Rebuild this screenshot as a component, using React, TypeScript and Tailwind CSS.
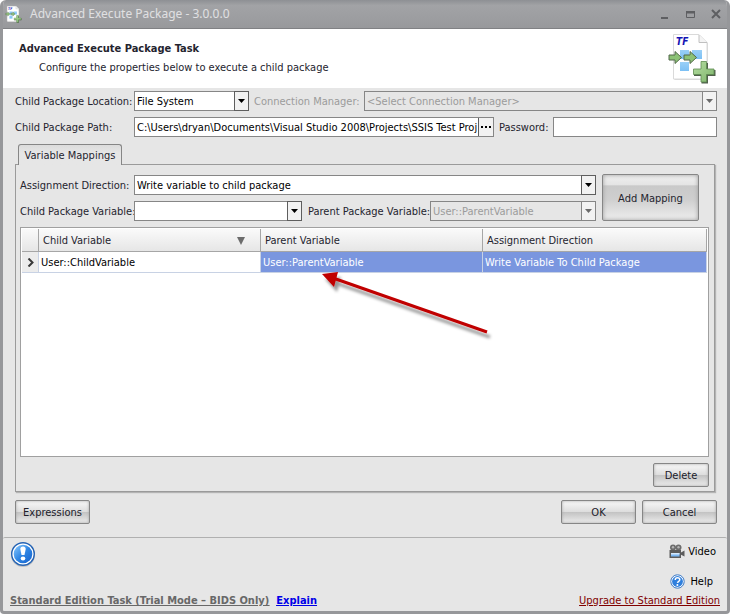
import React, { useId } from "react";

const FONT = "font-['DejaVu_Sans_Condensed','DejaVu_Sans','Noto_Sans',sans-serif]";

function PackageIcon({ className }: { className: string }) {
  return (
    <svg viewBox="0 0 48 50" className={className} aria-hidden="true">
      <defs>
        <linearGradient id="plusFill" x1="0" y1="0" x2="1" y2="1">
          <stop offset="0" stopColor="#b4dca0" />
          <stop offset="1" stopColor="#7fb56c" />
        </linearGradient>
        <linearGradient id="boxFill" x1="0" y1="0" x2="0" y2="1">
          <stop offset="0" stopColor="#9ad0f8" />
          <stop offset="1" stopColor="#7cc0f4" />
        </linearGradient>
      </defs>
      <path d="M6.500 1.500H32L40 9V46H6.500Z" fill="#d8d8d8" />
      <path d="M5.500 .5H31L39 8.500V45H5.500Z" fill="#fff" stroke="#dadada" />
      <path d="M31 1V8.500H39" fill="#f4f4f4" stroke="#c0c0c0" />
      <text x="8" y="11" fontSize="10" fontWeight="bold" fontStyle="italic" fill="#1414b4">TF</text>
      <g fill="url(#boxFill)">
        <rect x="12" y="16" width="9" height="9" />
        <rect x="24" y="16" width="10" height="9" />
        <rect x="12" y="28" width="9" height="9" />
      </g>
      <g fill="#8cc276" stroke="#52694a" strokeWidth="1" strokeLinejoin="round">
        <path d="M1 21H7V17.500L13.500 23.500L7 29.500V26H1Z" />
        <path d="M16 21H22V17.500L28.500 23.500L22 29.500V26H16Z" />
      </g>
      <path d="M33.500 29H40V36H47.500V42H40V49.500H33.500V42H26V36H33.500Z" fill="#51604c" />
      <path d="M33 27.500H38.500V35H46V40.500H38.500V48H33V40.500H25.500V35H33Z" fill="url(#plusFill)" stroke="#5e8c50" strokeWidth=".8" strokeLinejoin="round" />
    </svg>
  );
}

function InfoIcon() {
  return (
    <svg viewBox="0 0 26 26" className="size-[26px]" aria-hidden="true">
      <defs>
        <linearGradient id="infoFill" x1="0" y1="0" x2="1" y2="1">
          <stop offset="0" stopColor="#8ccbff" />
          <stop offset=".5" stopColor="#2f86e4" />
          <stop offset="1" stopColor="#1260cc" />
        </linearGradient>
      </defs>
      <circle cx="13" cy="14" r="12" fill="#a9a9a9" opacity=".6" />
      <circle cx="13" cy="13" r="11.300" fill="#fff" stroke="#2664b4" strokeWidth="1.400" />
      <circle cx="13" cy="13" r="9.300" fill="url(#infoFill)" />
      <path d="M10.300 8Q10.300 5.500 13 5.500T15.700 8L14.500 14H11.500Z" fill="#fff" />
      <ellipse cx="13" cy="17.500" rx="2.300" ry="2" fill="#fff" />
    </svg>
  );
}

function HelpIcon() {
  return (
    <svg viewBox="0 0 15 15" className="size-[15px]" aria-hidden="true">
      <circle cx="7.500" cy="7.500" r="6.700" fill="#fff" stroke="#3a78c4" />
      <circle cx="7.500" cy="7.500" r="5.400" fill="#2f7fdd" />
      <path d="M5.200 6Q5.300 3.800 7.500 3.800T9.800 5.800C9.800 7.300 7.700 7.200 7.500 8.800" fill="none" stroke="#fff" strokeWidth="1.500" />
      <circle cx="7.400" cy="11" r="1" fill="#fff" />
    </svg>
  );
}

function VideoIcon() {
  return (
    <svg viewBox="0 0 16 15" className="h-[15px] w-4" aria-hidden="true">
      <circle cx="4" cy="3.500" r="3" fill="#6c6c6c" />
      <circle cx="9.500" cy="3.500" r="3" fill="#6c6c6c" />
      <circle cx="4" cy="3.300" r="1.200" fill="#b4b4b4" />
      <circle cx="9.500" cy="3.300" r="1.200" fill="#b4b4b4" />
      <path d="M.5 6H12V8.500L15.500 6.500V12.500L12 10.800V14H.5Z" fill="#5c5c5c" />
      <rect x="2" y="9" width="8.500" height="3.500" fill="#7cb8f4" />
      <rect x="2" y="9" width="8.500" height="1.500" fill="#d4e8fc" />
    </svg>
  );
}

type DropProps = { id: string; value: string; className: string; disabled?: boolean };

function DropDown({ id, value, className, disabled }: DropProps) {
  return (
    <div className={`relative ${className}`}>
      <select
        id={id}
        disabled={disabled}
        className="block h-5 w-full appearance-none border border-[#868686] bg-white pt-px pr-4 pl-[2px] text-black opacity-100 disabled:bg-[#e6e6e6] disabled:text-[#9b9b9b]"
      >
        <option>{value}</option>
      </select>
      <span
        className={`pointer-events-none absolute inset-y-0 right-0 flex w-[15px] items-center justify-center border bg-[#f2f2f2] ${
          disabled ? "border-[#868686] text-[#6a6a6a]" : "border-[#5e5e5e] text-black"
        }`}
      >
        <svg viewBox="0 0 7 4" className="h-1 w-[7px]" fill="currentColor" aria-hidden="true">
          <path d="M0 0H7L3.500 4Z" />
        </svg>
      </span>
    </div>
  );
}

function GlossButton({ children, className }: { children: React.ReactNode; className: string }) {
  return (
    <button
      type="button"
      className={`rounded-[2px] border border-[#868686] bg-[linear-gradient(#f8f8f8_0,#dedede_48%,#c2c2c2_50%,#ececec_100%)] pt-[2px] text-[#20202a] shadow-[inset_0_0_3px_#a4a4a4] ${className}`}
    >
      {children}
    </button>
  );
}

export default function App() {
  const uid = useId();
  const id = (name: string) => `${uid}-${name}`;
  const label = "shrink-0 whitespace-nowrap pt-px";
  const th = "h-[23px] border-r border-b border-[#a6a6a6] bg-linear-to-b from-[#fafafa] to-[#e6e6e6] p-0 pt-[2px] pl-1 text-left font-normal";

  return (
    <div className={`flex min-h-screen flex-col overflow-hidden rounded-t-md rounded-b-sm border-x-[3px] border-b-[3px] border-[#96979a] bg-[#e6e6e6] text-[11px] leading-[14px] text-[#24242e] ${FONT}`}>
      <header className="flex h-[29px] items-center border-b border-[#808184] bg-linear-to-b from-[#8e9094] from-0% via-[#a2a3a6] via-20% to-[#98999c] pr-1 pl-[2px]">
        <PackageIcon className="size-[17px]" />
        <h1 className="ml-2 flex-1 font-['Noto_Sans',sans-serif] text-xs text-[#e0e0e2]">Advanced Execute Package - 3.0.0.0</h1>
        <div className="flex gap-3 text-[#5e5f62]">
          <button type="button" aria-label="Minimize" className="size-[14px]">
            <svg viewBox="0 0 14 14"><path d="M4 10H11V12H4Z" fill="currentColor" /></svg>
          </button>
          <button type="button" aria-label="Maximize" className="size-[14px]">
            <svg viewBox="0 0 14 14"><path d="M3.500 5V10.500H11.500V5" fill="none" stroke="currentColor" /><path d="M3 4H12V6.500H3Z" fill="currentColor" /></svg>
          </button>
          <button type="button" aria-label="Close" className="size-[14px]">
            <svg viewBox="0 0 14 14"><path d="M3 3L11 11M11 3L3 11" stroke="currentColor" strokeWidth="2" /></svg>
          </button>
        </div>
      </header>

      <section className="flex h-[59px] items-start justify-between bg-white pt-[13px] pr-[11px] pl-4">
        <div>
          <h2 className="font-bold">Advanced Execute Package Task</h2>
          <p className="mt-[5px] ml-5">Configure the properties below to execute a child package</p>
        </div>
        <PackageIcon className="-mt-2 h-[50px] w-12" />
      </section>

      <main className="flex flex-1 flex-col pr-[10px] pl-3">
        <div className="mt-[3px] flex items-center">
          <label htmlFor={id("loc")} className={`${label} w-[119px]`}>Child Package Location:</label>
          <DropDown id={id("loc")} value="File System" className="w-[115px]" />
          <label htmlFor={id("conn")} className={`${label} ml-[5px] w-[110px] text-[#9b9b9b]`}>Connection Manager:</label>
          <DropDown id={id("conn")} value="<Select Connection Manager>" className="min-w-0 flex-1" disabled />
        </div>
        <div className="mt-[6px] flex items-center">
          <label htmlFor={id("path")} className={`${label} w-[119px]`}>Child Package Path:</label>
          <div className="flex h-5 min-w-0 flex-1 border border-[#868686] bg-white">
            <input
              id={id("path")}
              className="mr-px min-w-0 flex-1 pt-px pl-[2px] text-black outline-none"
              defaultValue="C:\Users\dryan\Documents\Visual Studio 2008\Projects\SSIS Test Project\Child.dtsx"
            />
            <button type="button" aria-label="Browse" className="flex w-[15px] items-center justify-center gap-[2px] border-l border-[#5e5e5e] bg-[#f2f2f2]">
              <i className="size-[2px] bg-black" /><i className="size-[2px] bg-black" /><i className="size-[2px] bg-black" />
            </button>
          </div>
          <label htmlFor={id("pwd")} className={`${label} ml-[5px] w-[54px]`}>Password:</label>
          <input id={id("pwd")} type="password" className="h-5 w-[164px] border border-[#868686] bg-white px-1 outline-none" />
        </div>

        <div role="tablist" className="mt-[7px] flex pl-[3px]">
          <button
            type="button"
            role="tab"
            aria-selected="true"
            className="relative z-10 -mb-px h-[21px] w-[104px] rounded-t-[3px] border border-b-0 border-[#868686] bg-linear-to-b from-[#dcdcdc] to-[#e6e6e6] to-40% pt-[2px]"
          >
            Variable Mappings
          </button>
        </div>
        <div role="tabpanel" className="mr-[2px] flex flex-1 flex-col border border-[#9a9a9a] pt-[10px] pr-[5px] pb-1 pl-1 shadow-[1px_1px_1px_#b4b4b4]">
          <div className="flex pr-[10px]">
            <div className="flex min-w-0 flex-1 flex-col gap-[6px]">
              <div className="flex items-center">
                <label htmlFor={id("dir")} className={`${label} w-[114px]`}>Assignment Direction:</label>
                <DropDown id={id("dir")} value="Write variable to child package" className="min-w-0 flex-1" />
              </div>
              <div className="flex items-center">
                <label htmlFor={id("cvar")} className={`${label} w-[114px]`}>Child Package Variable:</label>
                <DropDown id={id("cvar")} value="" className="min-w-0 flex-1" />
                <label htmlFor={id("pvar")} className={`${label} ml-[6px] w-[122px]`}>Parent Package Variable:</label>
                <DropDown id={id("pvar")} value="User::ParentVariable" className="w-[166px]" disabled />
              </div>
            </div>
            <button
              type="button"
              className="-mt-px ml-[6px] h-[47px] w-[97px] rounded-[2px] border border-[#868686] bg-[linear-gradient(#f0f0f0_0,#e4e4e4_22%,#c9c9c9_24%,#cfcfcf_55%,#eeeeee_100%)] pt-[2px] shadow-[inset_0_0_4px_#9c9c9c]"
            >
              Add Mapping
            </button>
          </div>

          <div className="relative mt-[6px] flex-1 border border-[#a0a0a0] bg-white p-px">
            <table className="w-full table-fixed border-separate border-spacing-0">
              <thead>
                <tr>
                  <th className={`${th} w-[17px]`} />
                  <th className={`${th} w-[222px]`}>
                    <span className="flex items-center justify-between pr-[15px]">
                      Child Variable
                      <svg viewBox="0 0 8 8" className="size-2" aria-hidden="true"><path d="M0 0H8L4 8Z" fill="#6c6c6c" /></svg>
                    </span>
                  </th>
                  <th className={`${th} w-[222px]`}>Parent Variable</th>
                  <th className={th}>Assignment Direction</th>
                </tr>
              </thead>
              <tbody className="[&_td]:h-[21px] [&_td]:border-r [&_td]:border-b [&_td]:border-[#c8d2e4] [&_td]:p-0 [&_td]:pt-px [&_td]:pl-[2px]">
                <tr>
                  <td className="bg-[#ececec]">
                    <svg viewBox="0 0 8 9" className="ml-[3px] h-[9px] w-2" aria-hidden="true"><path d="M1.500 .5L5.500 4.500L1.500 8.500" fill="none" stroke="#383838" strokeWidth="2" /></svg>
                  </td>
                  <td className="text-black">User::ChildVariable</td>
                  <td className="bg-[#7a96df] text-white">User::ParentVariable</td>
                  <td className="bg-[#7a96df] text-white">Write Variable To Child Package</td>
                </tr>
              </tbody>
            </table>
            <svg viewBox="0 0 180 80" className="pointer-events-none absolute top-[42px] left-[296px] h-20 w-[180px]" aria-hidden="true">
              <defs>
                <filter id="arrowShadow" x="-20%" y="-20%" width="140%" height="150%">
                  <feDropShadow dx="3" dy="5" stdDeviation="1.500" floodColor="#000" floodOpacity=".4" />
                </filter>
              </defs>
              <g filter="url(#arrowShadow)">
                <path d="M16 8L170 62" stroke="#c00000" strokeWidth="3" />
                <path d="M5 4L21 2L17 17Z" fill="#c00000" />
              </g>
            </svg>
          </div>
          <div className="mt-[6px] flex justify-end">
            <GlossButton className="h-6 w-14">Delete</GlossButton>
          </div>
        </div>

        <div className="mt-2 mb-[13px] flex gap-[6px]">
          <GlossButton className="mr-auto h-6 w-[75px]">Expressions</GlossButton>
          <GlossButton className="h-6 w-[75px]">OK</GlossButton>
          <GlossButton className="h-6 w-[75px]">Cancel</GlossButton>
        </div>
      </main>

      <footer className="flex h-[74px] justify-between rounded-t-[2px] border-t border-[#b0b0b0] pt-[3px] pr-[7px] pb-[3px] pl-[7px]">
        <div className="flex flex-col justify-between">
          <InfoIcon />
          <div className="flex gap-[7px] font-bold underline">
            <a href="#edition" className="text-[#686868]">Standard Edition Task (Trial Mode – BIDS Only)</a>
            <a href="#explain" className="text-[#0000e8]">Explain</a>
          </div>
        </div>
        <div className="flex flex-col items-end justify-between text-black">
          <a href="#video" className="mt-[3px] mr-1 flex items-center gap-[3px]"><VideoIcon />Video</a>
          <a href="#help" className="mt-[10px] mr-[7px] flex items-center gap-[5px]"><HelpIcon />Help</a>
          <a href="#upgrade" className="text-[#800000] underline">Upgrade to Standard Edition</a>
        </div>
      </footer>
    </div>
  );
}
